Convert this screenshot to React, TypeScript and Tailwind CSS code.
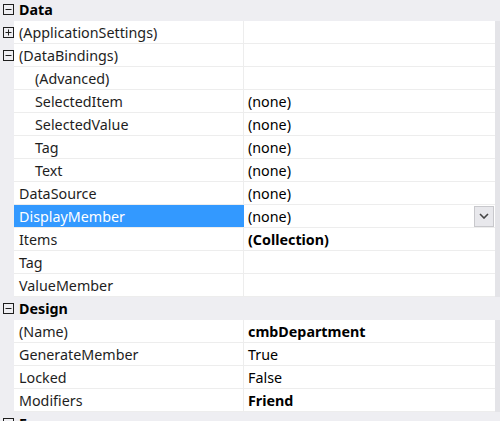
import React from "react";

type Row = {
  label: string;
  value?: string;
  bold?: boolean;
  indent?: boolean;
  toggle?: "plus" | "minus";
  selected?: boolean;
};

type Group = { title: string; rows: Row[] };

const groups: Group[] = [
  {
    title: "Data",
    rows: [
      { label: "(ApplicationSettings)", toggle: "plus" },
      { label: "(DataBindings)", toggle: "minus" },
      { label: "(Advanced)", indent: true },
      { label: "SelectedItem", value: "(none)", indent: true },
      { label: "SelectedValue", value: "(none)", indent: true },
      { label: "Tag", value: "(none)", indent: true },
      { label: "Text", value: "(none)", indent: true },
      { label: "DataSource", value: "(none)" },
      { label: "DisplayMember", value: "(none)", selected: true },
      { label: "Items", value: "(Collection)", bold: true },
      { label: "Tag" },
      { label: "ValueMember" },
    ],
  },
  {
    title: "Design",
    rows: [
      { label: "(Name)", value: "cmbDepartment", bold: true },
      { label: "GenerateMember", value: "True" },
      { label: "Locked", value: "False" },
      { label: "Modifiers", value: "Friend", bold: true },
    ],
  },
  { title: "Focus", rows: [] },
];

// little square expander box used in the gutter
const Toggle = ({ kind }: { kind: "plus" | "minus" }) => (
  <svg width="11" height="11" viewBox="0 0 11 11" className="block">
    <rect x="0.5" y="0.5" width="10" height="10" fill="none" stroke="#1e1e1e" />
    <line x1="2.5" y1="5.5" x2="8.5" y2="5.5" stroke="#1e1e1e" />
    {kind === "plus" && <line x1="5.5" y1="2.5" x2="5.5" y2="8.5" stroke="#1e1e1e" />}
  </svg>
);

const PropRow = ({ row }: { row: Row }) => (
  <div className="flex h-[23px]">
    <div className="w-[14px] flex items-center justify-center pl-[2px] bg-[#eeeef2]">
      {row.toggle && <Toggle kind={row.toggle} />}
    </div>
    <div className="flex flex-1 border-b border-[#ededed] bg-white">
      <div
        className={
          row.selected
            ? "w-[230px] flex items-center pl-[5px] pt-[1px] bg-[#3399ff] text-white"
            : "w-[230px] flex items-center pl-[5px] pt-[1px] text-[#1e1e1e] border-r border-[#ededed]"
        }
      >
        <span className={row.indent ? "pl-[16px]" : ""}>{row.label}</span>
      </div>
      <div className="flex-1 flex items-center pl-[4px] pr-[1px] text-black">
        <span className={row.bold ? "font-bold pt-[1px]" : "pt-[1px]"}>{row.value}</span>
        {row.selected && (
          <div className="ml-auto w-[20px] h-[21px] flex items-center justify-center bg-[#e8e8ec] border border-[#c8c8cc]">
            <svg width="10" height="6" viewBox="0 0 10 6">
              <path d="M1 1 L5 5 L9 1" fill="none" stroke="#454545" strokeWidth="1.6" />
            </svg>
          </div>
        )}
      </div>
    </div>
    <div className="w-[5px] bg-[#e4e4e8]" />
  </div>
);

export default function App() {
  return (
    <div
      className="w-[500px] h-[421px] overflow-hidden bg-[#eeeef2] text-[14.3px]"
      style={{ fontFamily: '"Noto Sans", "Open Sans", sans-serif' }}
    >
      <div className="-mt-[2px]">
        {groups.map((g) => (
          <div key={g.title}>
            <div className="flex h-[23px] items-center">
              <div className="w-[14px] flex items-center justify-center pl-[2px]">
                <Toggle kind="minus" />
              </div>
              <span className="pl-[5px] pt-[1px] font-bold text-black">{g.title}</span>
            </div>
            {g.rows.map((r, i) => (
              <PropRow key={i} row={r} />
            ))}
          </div>
        ))}
      </div>
    </div>
  );
}
